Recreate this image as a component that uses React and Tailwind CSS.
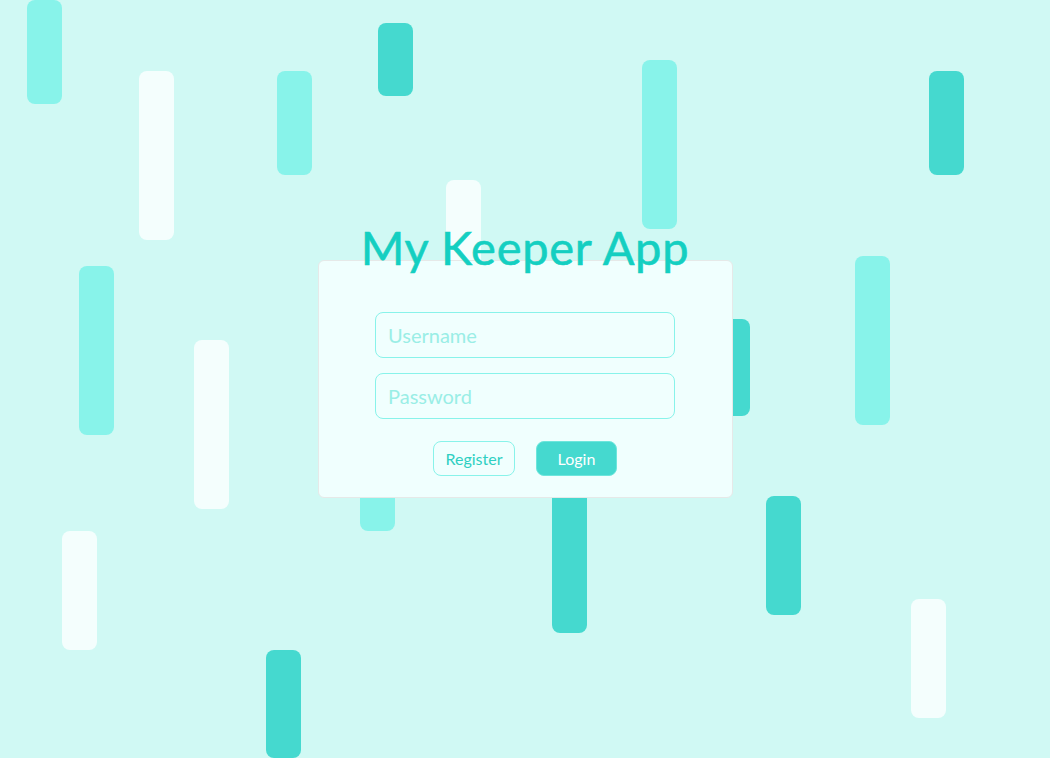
import React from "react";

const bars = [
  "left-[27px] top-0 h-[104px] bg-[#88f3ea]",
  "left-[139px] top-[71px] h-[169px] bg-[#f4fefd]",
  "left-[277px] top-[71px] h-[104px] bg-[#88f3ea]",
  "left-[378px] top-[23px] h-[73px] bg-[#45d9cf]",
  "left-[446px] top-[180px] h-[169px] bg-[#f4fefd]",
  "left-[642px] top-[60px] h-[169px] bg-[#88f3ea]",
  "left-[929px] top-[71px] h-[104px] bg-[#45d9cf]",
  "left-[79px] top-[266px] h-[169px] bg-[#88f3ea]",
  "left-[194px] top-[340px] h-[169px] bg-[#f4fefd]",
  "left-[855px] top-[256px] h-[169px] bg-[#88f3ea]",
  "left-[715px] top-[319px] h-[97px] bg-[#45d9cf]",
  "left-[360px] top-[427px] h-[104px] bg-[#88f3ea]",
  "left-[552px] top-[464px] h-[169px] bg-[#45d9cf]",
  "left-[766px] top-[496px] h-[119px] bg-[#45d9cf]",
  "left-[62px] top-[531px] h-[119px] bg-[#f4fefd]",
  "left-[911px] top-[599px] h-[119px] bg-[#f4fefd]",
  "left-[266px] top-[650px] h-[108px] bg-[#45d9cf]",
];

export default function App() {
  return (
    <div
      className="relative h-[758px] w-full overflow-hidden bg-[#d0f9f4] flex items-center justify-center"
      style={{ fontFamily: "Lato, 'Open Sans', sans-serif" }}
    >
      {bars.map((c, i) => (
        <div key={i} className={"absolute w-[35px] rounded-[8px] " + c} />
      ))}
      <div className="relative z-10 w-[415px] h-[238px] rounded-[6px] border border-[#e6e9e8] bg-[#f0fffe] flex flex-col items-center pt-[51px]">
        <h1 className="absolute left-0 right-0 top-[-42px] text-center text-[47px] leading-[56px] tracking-[0.7px] text-[#14cfc1] font-normal [-webkit-text-stroke:0.6px_#14cfc1]">
          My Keeper App
        </h1>
        <input
          className="w-[300px] h-[46px] rounded-[8px] border border-[#88f3ea] bg-transparent px-3 text-[20px] text-[#14cfc1] placeholder:text-[#9aeee6] outline-none"
          placeholder="Username"
        />
        <input
          className="mt-[15px] w-[300px] h-[46px] rounded-[8px] border border-[#88f3ea] bg-transparent px-3 text-[20px] text-[#14cfc1] placeholder:text-[#9aeee6] outline-none"
          placeholder="Password"
          type="password"
        />
        <div className="mt-[22px] flex gap-[21px]">
          <button className="w-[82px] h-[35px] rounded-[8px] border border-[#88f3ea] bg-transparent text-[16px] text-[#2ecfc2]">
            Register
          </button>
          <button className="w-[81px] h-[35px] rounded-[8px] border border-[#6de6dc] bg-[#45d9cf] text-[16px] text-white">
            Login
          </button>
        </div>
      </div>
    </div>
  );
}
